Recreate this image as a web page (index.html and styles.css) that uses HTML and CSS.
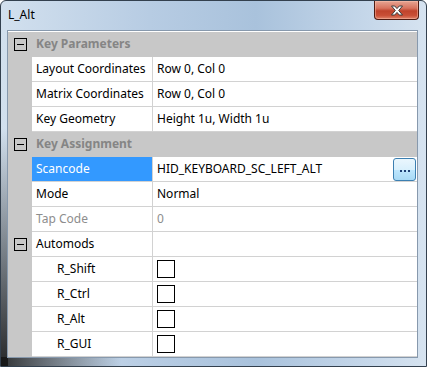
FILE: index.html
```html
<!DOCTYPE html>
<html lang="en">
<head>
  <meta charset="UTF-8" />
  <title>L_Alt</title>
  <link rel="stylesheet" href="styles.css">
</head>
<body>

<div class="window">
  <div class="titlebar">
    <span class="title">L_Alt</span>
    <div class="close">
      <svg width="14" height="11" viewBox="0 0 14 11">
        <path d="M1.5 1h3.2L7 3.6 9.3 1h3.2L8.7 5.5l3.8 4.5H9.3L7 7.4 4.7 10H1.5l3.8-4.5z" fill="#fff" stroke="#3b3b3b" stroke-width="1" stroke-linejoin="round"/>
      </svg>
    </div>
  </div>

  <div class="client">
    <div class="grid">
      <div class="row cat">
        <div class="gutter"><span class="toggle"></span></div>
        <div class="cat-name">Key Parameters</div>
      </div>
      <div class="row">
        <div class="gutter"></div>
        <div class="name">Layout Coordinates</div>
        <div class="value">Row 0, Col 0</div>
      </div>
      <div class="row">
        <div class="gutter"></div>
        <div class="name">Matrix Coordinates</div>
        <div class="value">Row 0, Col 0</div>
      </div>
      <div class="row">
        <div class="gutter"></div>
        <div class="name">Key Geometry</div>
        <div class="value">Height 1u, Width 1u</div>
      </div>

      <div class="row cat">
        <div class="gutter"><span class="toggle"></span></div>
        <div class="cat-name">Key Assignment</div>
      </div>
      <div class="row">
        <div class="gutter"></div>
        <div class="name selected">Scancode</div>
        <div class="value">
          <span>HID_KEYBOARD_SC_LEFT_ALT</span>
          <button class="dots"><i></i><i></i><i></i></button>
        </div>
      </div>
      <div class="row">
        <div class="gutter"></div>
        <div class="name">Mode</div>
        <div class="value">Normal</div>
      </div>
      <div class="row disabled">
        <div class="gutter"></div>
        <div class="name">Tap Code</div>
        <div class="value">0</div>
      </div>
      <div class="row">
        <div class="gutter"><span class="toggle"></span></div>
        <div class="name">Automods</div>
        <div class="value"></div>
      </div>
      <div class="row">
        <div class="gutter"></div>
        <div class="name sub">R_Shift</div>
        <div class="value"><span class="check"></span></div>
      </div>
      <div class="row">
        <div class="gutter"></div>
        <div class="name sub">R_Ctrl</div>
        <div class="value"><span class="check"></span></div>
      </div>
      <div class="row">
        <div class="gutter"></div>
        <div class="name sub">R_Alt</div>
        <div class="value"><span class="check"></span></div>
      </div>
      <div class="row">
        <div class="gutter"></div>
        <div class="name sub">R_GUI</div>
        <div class="value"><span class="check"></span></div>
      </div>
    </div>
  </div>
</div>

</body>
</html>
```

FILE: styles.css
```css
body {
  margin: 0;
  font-family: 'Noto Sans', 'Open Sans', sans-serif;
  font-size: 12px;
  color: #000;
  background: #fff;
}

.window {
  width: 427px;
  height: 367px;
  box-sizing: border-box;
  border: 1px solid #33404e;
  border-radius: 6px 6px 0 0;
  display: flex;
  flex-direction: column;
  background:
    linear-gradient(to bottom, rgba(20, 24, 30, 0) 35%, rgba(20, 20, 20, 0.9) 100%) left top / 7px 100% no-repeat,
    linear-gradient(to right, rgba(20, 20, 20, 0.85), rgba(60, 70, 80, 0) 120px) left bottom / 100% 9px no-repeat,
    linear-gradient(to right, #d2e0ee 0, #b7cce3 35%, #a9c2dc 60%, #c4d6e9 85%, #d6e3f0 100%);
}

.titlebar {
  height: 29px;
  display: flex;
  align-items: flex-start;
  justify-content: space-between;
}

.title {
  margin: 6px 0 0 7px;
  font-size: 12px;
  line-height: 16px;
}

.close {
  width: 45px;
  height: 19px;
  margin-right: 7px;
  box-sizing: border-box;
  border: 1px solid #4f1b12;
  border-top: none;
  border-radius: 0 0 4px 4px;
  background: linear-gradient(to bottom, #e7a593 0, #d8735e 40%, #c0432c 55%, #c94f36 80%, #e0826a 100%);
  box-shadow: inset 0 0 0 1px rgba(255, 200, 180, 0.45);
  display: flex;
  align-items: center;
  justify-content: center;
}

.client {
  margin: 0 8px 8px 6px;
  border: 1px solid #8799ad;
  padding-top: 1px;
  background: #fff;
  flex: 1;
}

.grid {
  display: flex;
  flex-direction: column;
}

.row {
  display: flex;
  height: 25px;
}

.gutter {
  width: 24px;
  flex: none;
  background: #c8c8c8;
  display: flex;
  align-items: center;
}

.toggle {
  width: 11px;
  height: 11px;
  margin-left: 6px;
  border: 1px solid #000;
  position: relative;
}

.toggle::after {
  content: '';
  position: absolute;
  left: 2px;
  right: 2px;
  top: 5px;
  height: 1px;
  background: #000;
}

.cat {
  background: #c8c8c8;
}

.cat-name {
  padding-left: 4px;
  font-weight: bold;
  color: #858585;
  line-height: 24px;
}

.name,
.value {
  box-sizing: border-box;
  border-bottom: 1px solid #d2d2d2;
  line-height: 24px;
  padding-left: 4px;
  white-space: nowrap;
}

.name {
  width: 121px;
  flex: none;
  border-right: 1px solid #d2d2d2;
}

.name.sub {
  padding-left: 25px;
}

.name.selected {
  background: #3399ff;
  color: #fff;
}

.value {
  flex: 1;
  display: flex;
  align-items: center;
  justify-content: space-between;
}

.disabled .name,
.disabled .value {
  color: #8d8d8d;
}

.dots {
  width: 23px;
  height: 23px;
  margin: 0 1px 0 0;
  padding: 0 0 8px;
  box-sizing: border-box;
  border: 1px solid #3c7fb1;
  border-radius: 3px;
  background: linear-gradient(to bottom, #eaf6fd 0, #d9f0fc 50%, #bee6fd 51%, #a7d9f5 100%);
  display: flex;
  align-items: flex-end;
  justify-content: center;
  gap: 2px;
}

.dots i {
  width: 2px;
  height: 2px;
  background: #1c3f73;
}

.check {
  width: 16px;
  height: 16px;
  border: 1px solid #000;
}
```
